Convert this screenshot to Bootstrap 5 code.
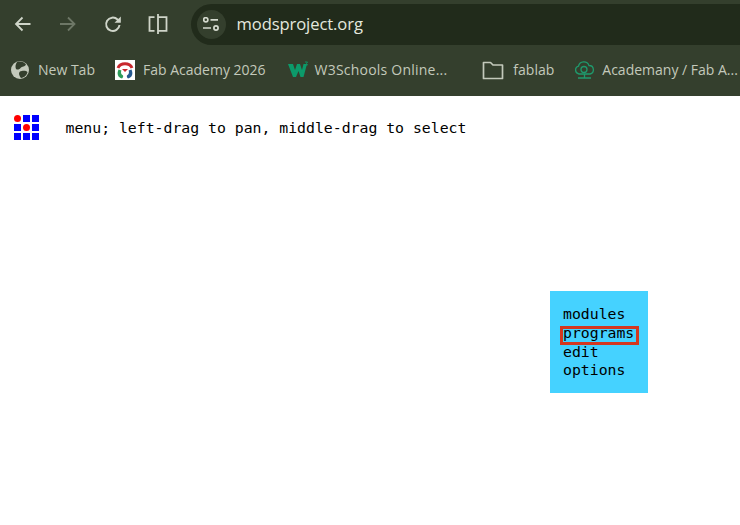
<!DOCTYPE html>
<html lang="en"><head><meta charset="utf-8"><title>mods</title>
<link rel="stylesheet" href="https://cdn.jsdelivr.net/npm/bootstrap@5.3.0/dist/css/bootstrap.min.css">
<style>
html,body{height:100%;overflow:hidden;background:#fff}
.chrome-ui{background:#343f2d;font-family:"Open Sans","Noto Sans",sans-serif;color:#c3c9bb}
.tool-row{height:50px;padding-left:13px;padding-bottom:2px}
.tool-btn{width:20px;height:20px;flex:none}
.tool-gap-a{margin-right:25px}.tool-gap-b{margin-right:24.5px}.tool-gap-c{margin-right:25px}.tool-gap-d{margin-right:23px}
.addr-pill{height:41px;flex:1;background:#212b1b;border-radius:21px 0 0 21px;padding-left:6px}
.addr-tune{width:29px;height:29px;background:#343f2d;border-radius:50%}
.addr-text{font-size:16.6px;color:#e4e8df;margin-left:11px;letter-spacing:-.1px}
.mark-row{height:46px;padding-left:10px;padding-bottom:7px;white-space:nowrap;overflow:hidden;font-size:14px}
.mark-item{gap:8px;flex:none}
.mark-a{margin-right:20px}
.mark-b{margin-right:22px}
.mark-c{margin-right:35px;gap:7px;letter-spacing:.22px}
.mark-d{margin-right:20px;gap:9px}
.mark-e{gap:7px}
.mark-ico{width:20px;height:20px;flex:none}
.mark-ico-w21{width:21px}
.mark-ico-w22{width:22px}
.canvas-area{position:relative;height:429px;background:#fff;font-family:"DejaVu Sans Mono","Liberation Mono",monospace;font-size:14.8px;color:#000}
.app-logo{position:absolute;left:14px;top:19px;width:25px;height:25px}
.app-hint{position:absolute;left:65.5px;top:23px;line-height:18px;white-space:pre}
.pop-menu{position:absolute;left:550px;top:195px;width:98px;height:102px;background:#45d2ff;padding:14px 0 0 13px;line-height:18.8px}
.pop-row{position:relative}
.pop-hit::after{content:"";position:absolute;left:-3px;top:2px;width:79px;height:19px;border:3px solid #d4371f}
</style></head><body>
<div class="chrome-ui">
 <div class="tool-row d-flex align-items-center">
  <svg class="tool-btn tool-gap-a" viewBox="0 0 20 20" fill="none" stroke="#cfd5c9" stroke-width="1.8"><path d="M17.500 10H3M9.500 3.500 3 10l6.500 6.500"/></svg>
  <svg class="tool-btn tool-gap-b" viewBox="0 0 20 20" fill="none" stroke="#6d7766" stroke-width="1.8"><path d="M2 10h14.500M10 3.500l6.500 6.500-6.500 6.500"/></svg>
  <svg class="tool-btn tool-gap-c" viewBox="0 0 20 20" fill="none" stroke="#cfd5c9" stroke-width="2"><path d="M16.500 11a6.700 6.700 0 1 1-2-5.500L16.500 7.500"/><path d="M17.800 2.500v6.300h-6.300z" fill="#cfd5c9" stroke="none"/></svg>
  <svg class="tool-btn tool-gap-d" viewBox="0 0 20 20" fill="none" stroke="#cfd5c9" stroke-width="1.8"><path d="M6.500 3.200H1.500v13.600h5M10 0v20"/><path d="M10 3.200h8.500v13.600H10"/></svg>
  <div class="addr-pill d-flex align-items-center">
   <div class="addr-tune d-flex align-items-center justify-content-center">
    <svg width="16" height="14" viewBox="0 0 16 14" fill="none" stroke="#d5dacf" stroke-width="1.7"><circle cx="2.800" cy="2.800" r="2.100"/><path d="M7.500 2.800H15M0 11h8"/><circle cx="13" cy="11" r="2.100"/></svg>
   </div>
   <span class="addr-text">modsproject.org</span>
  </div>
 </div>
 <div class="mark-row d-flex align-items-center">
  <div class="mark-item mark-a d-flex align-items-center">
   <svg class="mark-ico" viewBox="0 0 20 20"><circle cx="10" cy="10" r="9" fill="#c3c9bb"/><path d="M7 2c4-1 7 0 9 2.500-1 2.500-4 1.500-5.500 3.500-1 1.500-3 2-4.500 1-1-2-.5-5 1-7zM10 11.500c2-1 6-1.500 7.500.500-.5 3-3 5.500-6.500 6-1.500-2-3-4.500-1-6.500z" fill="#343f2d"/></svg>
   <span>New Tab</span>
  </div>
  <div class="mark-item mark-b d-flex align-items-center">
   <svg class="mark-ico" viewBox="0 0 20 20"><rect width="20" height="20" fill="#fff"/><path d="M3 8A7.500 6.500 0 0 1 17 8" fill="none" stroke="#c8282e" stroke-width="3"/><path d="M7 9h6l-3 3z" fill="#c8282e"/><path d="M3.500 9.500C1.500 14 3 17.500 7 18.500c1.500-1 1.500-3 .5-3.500C5.500 14 6 11 6.500 10.500z" fill="#2d9b5a"/><path d="M16.500 9.500c2 4.500.5 8-3.500 9-1.500-1-1.500-3-.5-3.500 2-1 1.500-4 1-4.500z" fill="#25598f"/></svg>
   <span>Fab Academy 2026</span>
  </div>
  <div class="mark-item mark-c d-flex align-items-center">
   <svg class="mark-ico" viewBox="0 0 20 20"><path d="M0 4h5l2 6 2-6h3l2 6 1.500-6H19l-3.500 13h-3L10.500 11 8 17H5z" fill="#0c9a6a"/><path d="M17 2h2.500l-1 1.500 1 1.500H17" fill="none" stroke="#0c9a6a" stroke-width=".9"/></svg>
   <span>W3Schools Online...</span>
  </div>
  <div class="mark-item mark-d d-flex align-items-center">
   <svg class="mark-ico mark-ico-w22" viewBox="0 0 22 20" fill="none" stroke="#c3c9bb" stroke-width="1.700"><path d="M1.500 2.500h7l2.500 2.500h9.500v13.500h-19z" stroke-linejoin="round"/></svg>
   <span>fablab</span>
  </div>
  <div class="mark-item mark-e d-flex align-items-center">
   <svg class="mark-ico mark-ico-w21" viewBox="0 0 21 20" fill="none" stroke="#1f9a6d" stroke-width="1.300"><path d="M5 14a4 4 0 0 1-.5-7.800A5.500 5.500 0 0 1 15 5.500 4.300 4.300 0 0 1 16 14z"/><circle cx="10" cy="9.500" r="3"/><path d="M10.500 14v3.500M4 18h13"/></svg>
   <span>Academany / Fab A...</span>
  </div>
 </div>
</div>
<div class="canvas-area">
 <svg class="app-logo" viewBox="0 0 25 25"><g fill="#0000ff"><rect x="9" y="0" width="7" height="7"/><rect x="18" y="0" width="7" height="7"/><rect x="0" y="9" width="7" height="7"/><rect x="18" y="9" width="7" height="7"/><rect x="0" y="18" width="7" height="7"/><rect x="9" y="18" width="7" height="7"/><rect x="18" y="18" width="7" height="7"/></g><g fill="#ff0000"><circle cx="3.500" cy="3.500" r="3.500"/><circle cx="12.500" cy="12.500" r="3.500"/></g></svg>
 <div class="app-hint">menu; left-drag to pan, middle-drag to select</div>
 <div class="pop-menu">
  <div class="pop-row">modules</div>
  <div class="pop-row pop-hit">programs</div>
  <div class="pop-row">edit</div>
  <div class="pop-row">options</div>
 </div>
</div>
<script src="https://cdn.jsdelivr.net/npm/bootstrap@5.3.0/dist/js/bootstrap.bundle.min.js"></script>
</body></html>
